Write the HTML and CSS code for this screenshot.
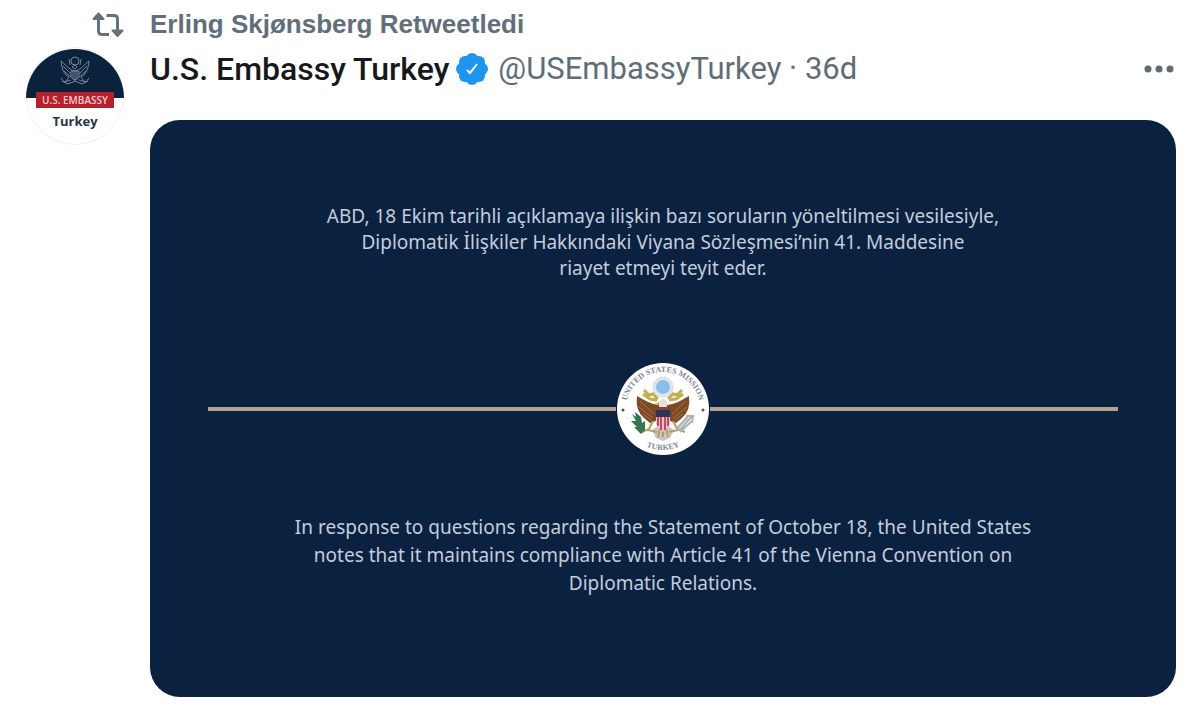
FILE: index.html
```html
<!DOCTYPE html>
<html lang="tr">
<head>
<meta charset="utf-8">
<meta name="viewport" content="width=device-width, initial-scale=1">
<title>U.S. Embassy Turkey</title>
<link rel="stylesheet" href="styles.css">
</head>
<body>
<article class="tweet">
  <div class="tweet-side">
    <svg class="retweet-icon" viewBox="0 0 32 26" aria-hidden="true">
      <path d="M6.500 5V19Q6.500 22.500 10 22.500H17M14.500 3.500H22Q25.500 3.500 25.500 7V20"/>
      <path class="retweet-heads" d="M6.500 1.500 11.500 7H1.500ZM25.500 24 20.500 18.500H30.500Z"/>
    </svg>
    <svg class="avatar" viewBox="0 0 98 98" role="img" aria-label="U.S. Embassy Turkey">
      <circle class="avatar-base" cx="49" cy="49" r="48.500"/>
      <path class="navy" d="M0 51A49 49 0 0 1 98 51Z"/>
      <g class="crest">
        <path d="M49 24C43 23 39 17 35 14Q36 27 43 30L39 36M49 24C55 23 59 17 63 14Q62 27 55 30L59 36M37 19 45 27M38 24 45 30M61 19 53 27M60 24 53 30M45 24V30Q49 36 53 30V24ZM49 24V34M47 24V32M51 24V32M45 33 38 35 35 31M53 33 60 35 63 31M36 34 42 37 49 34 56 37 62 34"/>
        <circle cx="49" cy="14" r="4"/>
        <path d="M49 22 46 20 49 18 51 20ZM43 12 44 18M55 12 54 18"/>
      </g>
      <path class="red" d="M10 45H88V61H10Z"/>
      <text class="avatar-label" x="49" y="57">U.S. EMBASSY</text>
      <text class="avatar-name" x="49" y="79">Turkey</text>
    </svg>
  </div>
  <div class="tweet-main">
    <a class="retweeted" href="#">Erling Skjønsberg Retweetledi</a>
    <header class="tweet-header">
      <a class="name" href="#">U.S. Embassy Turkey</a>
      <svg class="verified" viewBox="0 0 32 32" role="img" aria-label="Verified">
        <g class="verified-shape"><circle cx="16" cy="16" r="14"/><circle cx="16" cy="6" r="6"/><circle cx="23" cy="9" r="6"/><circle cx="26" cy="16" r="6"/><circle cx="23" cy="23" r="6"/><circle cx="16" cy="26" r="6"/><circle cx="9" cy="23" r="6"/><circle cx="6" cy="16" r="6"/><circle cx="9" cy="9" r="6"/></g>
        <path class="tick" d="M11 17 14 20 21 11"/>
      </svg>
      <a class="meta" href="#">@USEmbassyTurkey · 36d</a>
      <button class="more" type="button" aria-label="More">
        <svg viewBox="0 0 32 8" aria-hidden="true"><circle cx="4" cy="4" r="3.500"/><circle cx="15" cy="4" r="3.500"/><circle cx="26" cy="4" r="3.500"/></svg>
      </button>
    </header>
    <section class="card">
      <p class="statement turkish">ABD, 18 Ekim tarihli açıklamaya ilişkin bazı soruların yöneltilmesi vesilesiyle,<br>Diplomatik İlişkiler Hakkındaki Viyana Sözleşmesi’nin 41. Maddesine<br>riayet etmeyi teyit eder.</p>
      <div class="divider">
        <svg class="seal" viewBox="0 0 94 94" role="img" aria-label="United States Mission Turkey">
          <defs>
            <path id="arc-top" d="M10 47A37 37 0 0 1 84 47"/>
            <path id="arc-bottom" d="M6 47A41 41 0 0 0 88 47"/>
          </defs>
          <circle class="white" cx="47" cy="47" r="46"/>
          <text class="seal-text"><textPath href="#arc-top" startOffset="50%">UNITED STATES MISSION</textPath></text>
          <text class="seal-text"><textPath href="#arc-bottom" startOffset="50%">TURKEY</textPath></text>
          <circle class="dot" cx="7" cy="48" r="1.500"/><circle class="dot" cx="87" cy="48" r="1.500"/>
          <circle class="glory" cx="47" cy="25" r="10"/>
          <circle class="sky" cx="47" cy="25" r="7"/>
          <path class="ribbon" d="M28 28 33 33 37 32 42 37M66 28 61 33 57 32 52 37M27 32 34 37 41 38M67 32 60 37 53 38"/>
          <path class="wing" d="M42 43C35 42 28 38 21 34Q19 48 28 56L34 61 40 59 44 63H50L54 59 60 61 66 56Q75 48 73 34C66 38 59 42 52 43L47 40Z"/>
          <path class="feather" d="M24 39 38 52M23 45 37 56M27 52 35 58M70 39 56 52M71 45 57 56M67 52 59 58"/>
          <path class="head" d="M43 45V40L47 36 51 39V45Z"/>
          <path class="beak" d="M43 40 39 42 43 43Z"/>
          <path class="gray" d="M36 68 42 64H52L58 68 54 76 47 79 40 76Z"/>
          <path class="gold-line" d="M37 59 33 67 26 70M57 59 61 67 69 70M32 68 41 70M62 68 53 70M44 66 42 75M50 66 52 75M47 66V75"/>
          <path class="shield" d="M40 48H54V62Q52 67 47 70 42 67 40 62Z"/>
          <path class="stripes" d="M42 55V64M45 55V68M49 55V68M52 55V64"/>
          <path class="shield-top" d="M40 48H54V55H40Z"/>
          <path class="leaf" d="M16 52 20 55 19 50 25 55 26 61 29 59 29 68 25 72 18 65 21 65 15 59 20 59Z"/>
          <path class="arrows" d="M61 67 73 53M63 69 76 54M64 70 76 59M62 65 71 56M70 54 77 54 76 61"/>
        </svg>
      </div>
      <p class="statement english" lang="en">In response to questions regarding the Statement of October 18, the United States<br>notes that it maintains compliance with Article 41 of the Vienna Convention on<br>Diplomatic Relations.</p>
    </section>
  </div>
</article>
</body>
</html>
```
FILE: styles.css
```css
* { box-sizing: border-box; }
body { margin: 0; background: #fff; font-family: Roboto, "Liberation Sans", sans-serif; }
a { color: inherit; text-decoration: none; }
.tweet { display: grid; grid-template-columns: 98px minmax(0, 1fr); column-gap: 26px; padding: 8px 24px 20px 26px; }
.tweet-side { display: flex; flex-direction: column; align-items: flex-end; gap: 9px; padding-top: 4px; }
.retweet-icon { width: 32px; height: 26px; fill: none; stroke: #64727c; stroke-width: 3; }
.retweet-heads { fill: #64727c; stroke-width: 2; stroke-linejoin: round; }
.avatar { width: 98px; height: 98px; }
.avatar-base { fill: #fff; stroke: #f2f0f0; }
.navy { fill: #0b223c; }
.red { fill: #b91e2b; }
.crest { fill: none; stroke: #77869a; stroke-width: 1; }
.avatar-label { fill: #f0cfd2; font: 600 10px "Open Sans", sans-serif; text-anchor: middle; }
.avatar-name { fill: #24344f; font: 700 13px "Open Sans", sans-serif; text-anchor: middle; }
.tweet-main { display: flex; flex-direction: column; }
.retweeted { color: #5f6f7b; font-family: "Liberation Sans", sans-serif; font-size: 26px; font-weight: 700; line-height: 32px; }
.tweet-header { display: flex; align-items: center; height: 58px; color: #5f6d78; font-size: 31px; line-height: 40px; white-space: nowrap; }
.name { color: #15191c; font-size: 32px; font-weight: 500; }
.verified { flex: none; width: 32px; height: 32px; margin: 0 10px 0 7px; }
.verified-shape { fill: #1d96ef; }
.tick { fill: none; stroke: #fff; stroke-width: 2; }
.more { display: flex; margin-left: auto; padding: 0; border: 0; background: none; cursor: pointer; }
.more svg { width: 32px; height: 8px; fill: #5d6b76; }
.card { display: flex; flex-direction: column; margin-top: 22px; padding: 83px 58px 100px; border-radius: 30px; background: #0a2140; color: #c3cddb; text-align: center; }
.statement { margin: 0; font-family: "Noto Sans", "Open Sans", sans-serif; font-size: 19px; }
.turkish { line-height: 26px; }
.english { line-height: 28px; }
.divider { display: flex; align-items: center; margin: 81px 0 57px; }
.divider::before, .divider::after { content: ""; flex: 1; height: 4px; background: #b3a28d; }
.seal { width: 94px; height: 94px; }
.white { fill: #fff; }
.seal-text { fill: #7c8591; font: 700 8px "Liberation Serif", serif; text-anchor: middle; }
.dot { fill: #4a5361; }
.glory { fill: #e1e6e9; stroke: #c4ced5; stroke-width: 1; stroke-dasharray: 2 1; }
.sky { fill: #86bfed; }
.ribbon { fill: none; stroke: #c6ad4a; stroke-width: 3; }
.wing { fill: #7e4a26; }
.feather { fill: none; stroke: #a27445; stroke-width: 1; }
.head { fill: #e5e2dc; }
.beak { fill: #d4a633; }
.gray { fill: #c6c6c4; }
.gold-line { fill: none; stroke: #b4a05a; stroke-width: 2; }
.shield { fill: #e8c1cb; }
.stripes { fill: none; stroke: #c34960; stroke-width: 2; }
.shield-top { fill: #29345f; }
.leaf { fill: #34764d; }
.arrows { fill: none; stroke: #adb1b2; stroke-width: 2; }
```
